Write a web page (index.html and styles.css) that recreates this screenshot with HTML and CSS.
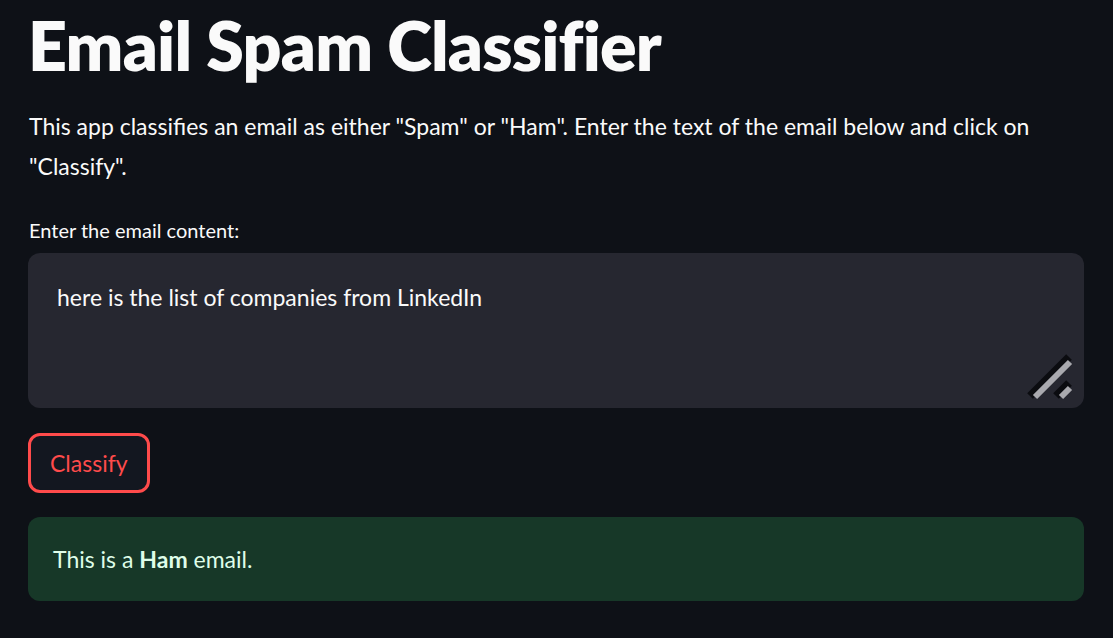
FILE: index.html
```html
<!DOCTYPE html>
<html lang="en">
<head>
<meta charset="utf-8">
<title>Email Spam Classifier</title>
<link rel="stylesheet" href="styles.css">
</head>
<body>
<main class="app">
  <h1 class="title">Email Spam Classifier</h1>
  <p class="intro">This app classifies an email as either "Spam" or "Ham". Enter the text of the email below and click on "Classify".</p>
  <label class="label" for="email">Enter the email content:</label>
  <div class="textarea-wrap">
    <textarea id="email" class="textarea">here is the list of companies from LinkedIn</textarea>
    <svg class="grip" width="48" height="48" viewBox="0 0 48 48" aria-hidden="true">
      <line x1="3" y1="43" x2="42" y2="4" stroke="#0b0c10" stroke-width="8"/>
      <line x1="8" y1="44" x2="43" y2="9" stroke="#a9a9ae" stroke-width="6"/>
      <line x1="29" y1="43" x2="42" y2="30" stroke="#0b0c10" stroke-width="8"/>
      <line x1="34" y1="44" x2="43" y2="35" stroke="#a9a9ae" stroke-width="6"/>
    </svg>
  </div>
  <div class="actions">
    <button class="btn" type="button">Classify</button>
  </div>
  <div class="alert">This is a <strong>Ham</strong> email.</div>
</main>
</body>
</html>
```

FILE: styles.css
```css
* { box-sizing: border-box; }
html, body {
  margin: 0;
  background: #0e1117;
  color: #fafafa;
  font-family: "Lato", "Source Sans Pro", "Liberation Sans", sans-serif;
}
.app {
  display: flex;
  flex-direction: column;
  padding: 4px 29px 0 28px;
}
.title {
  margin: 0;
  font-size: 68px;
  line-height: 82px;
  font-weight: 800;
  letter-spacing: -0.8px;
}
.intro {
  margin: 20px 0 0 1px;
  font-size: 23px;
  line-height: 40px;
}
.label {
  margin: 27px 0 0 1px;
  font-size: 20px;
  line-height: 35px;
}
.textarea-wrap {
  position: relative;
  margin-top: 5px;
  height: 155px;
}
.textarea {
  display: block;
  width: 100%;
  height: 100%;
  resize: none;
  border: none;
  outline: none;
  border-radius: 12px;
  background: #262730;
  color: #fafafa;
  font-family: inherit;
  font-size: 23px;
  line-height: 40px;
  padding: 24px 29px;
}
.grip {
  position: absolute;
  right: 9px;
  bottom: 7px;
}
.actions {
  display: flex;
  margin-top: 25px;
}
.btn {
  height: 60px;
  padding: 0 19px;
  border: 3px solid #ff4b4b;
  border-radius: 12px;
  background: #131720;
  color: #ff4b4b;
  font-family: inherit;
  font-size: 23px;
  line-height: 40px;
}
.alert {
  margin-top: 24px;
  border-radius: 12px;
  background: #173828;
  color: #dffde9;
  font-size: 23px;
  line-height: 40px;
  padding: 22px 25px;
}
.alert strong { font-weight: 700; }
```
